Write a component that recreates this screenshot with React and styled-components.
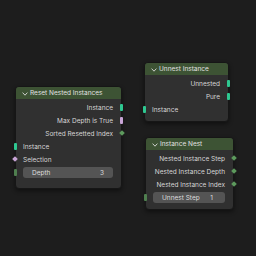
import React from "react";
import styled, { createGlobalStyle } from "styled-components";

const GlobalStyle = createGlobalStyle`
  html, body {
    margin: 0;
    padding: 0;
    background: #1d1d1d;
  }
  #root {
    width: 256px;
    height: 256px;
  }
`;

const SOCKET_COLORS = {
  instance: "#2ec891",
  bool: "#c8a4d6",
  int: "#5d9a5d",
  intDim: "#4f7f4f",
};

const nodes = [
  {
    id: "reset",
    title: "Reset Nested Instances",
    x: 15,
    y: 86,
    width: 107,
    padBottom: 9,
    valuePad: 9,
    rows: [
      { side: "out", label: "Instance", socket: "bar", color: "instance" },
      { side: "out", label: "Max Depth is True", socket: "bar", color: "bool" },
      { side: "out", label: "Sorted Resetted Index", socket: "diamond", color: "int" },
      { side: "in", label: "Instance", socket: "bar", color: "instance" },
      { side: "in", label: "Selection", socket: "diamond", color: "bool" },
      { side: "field", label: "Depth", value: "3", socket: "bar", color: "intDim" },
    ],
  },
  {
    id: "unnest",
    title: "Unnest Instance",
    x: 144,
    y: 62,
    width: 85,
    padBottom: 5,
    valuePad: 9,
    rows: [
      { side: "out", label: "Unnested", socket: "bar", color: "instance" },
      { side: "out", label: "Pure", socket: "bar", color: "instance" },
      { side: "in", label: "Instance", socket: "bar", color: "instance" },
    ],
  },
  {
    id: "nest",
    title: "Instance Nest",
    x: 145,
    y: 137,
    width: 89,
    padBottom: 5,
    valuePad: 12,
    rows: [
      { side: "out", label: "Nested Instance Step", socket: "diamond", color: "int" },
      { side: "out", label: "Nested Instance Depth", socket: "diamond", color: "int" },
      { side: "out", label: "Nested Instance Index", socket: "diamond", color: "int" },
      { side: "field", label: "Unnest Step", value: "1", socket: "bar", color: "intDim" },
    ],
  },
];

const Chevron = () => (
  <svg width="6" height="4" viewBox="0 0 6 4">
    <path d="M0.6 0.6 L3 3.2 L5.4 0.6" fill="none" stroke="#dcdcdc" strokeWidth="0.9" />
  </svg>
);

const Socket = ({ shape, color, side }) =>
  shape === "diamond" ? (
    <Diamond $color={SOCKET_COLORS[color]} $side={side} />
  ) : (
    <Bar $color={SOCKET_COLORS[color]} $side={side} />
  );

const NodeRow = ({ row, valuePad }) => {
  const side = row.side === "out" ? "out" : "in";
  if (row.side === "field") {
    return (
      <Row $side="in">
        <Socket shape={row.socket} color={row.color} side="in" />
        <Field $valuePad={valuePad}>
          <span>{row.label}</span>
          <span>{row.value}</span>
        </Field>
      </Row>
    );
  }
  return (
    <Row $side={side}>
      <Label>{row.label}</Label>
      <Socket shape={row.socket} color={row.color} side={side} />
    </Row>
  );
};

const App = () => (
  <>
    <GlobalStyle />
    <Canvas>
      {nodes.map((node) => (
        <Node key={node.id} style={{ left: node.x, top: node.y, width: node.width }}>
          <Header>
            <Chevron />
            <span>{node.title}</span>
          </Header>
          <Body $padBottom={node.padBottom}>
            {node.rows.map((row, i) => (
              <NodeRow key={i} row={row} valuePad={node.valuePad} />
            ))}
          </Body>
        </Node>
      ))}
    </Canvas>
  </>
);

export default App;

const Canvas = styled.div`
  position: relative;
  width: 256px;
  height: 256px;
  background: #1d1d1d;
  overflow: hidden;
  font-family: Inter, "Liberation Sans", sans-serif;
  font-size: 6.5px;
  color: #d6d6d6;
`;

const Node = styled.div`
  position: absolute;
  box-sizing: border-box;
  border-radius: 4px;
  background: #303030;
  border: 1px solid #161616;
  box-shadow: 0 2px 4px rgba(0, 0, 0, 0.45);
`;

const Header = styled.div`
  display: flex;
  align-items: center;
  gap: 2px;
  height: 12px;
  padding: 0 6px;
  background: #3d5334;
  border-radius: 3px 3px 0 0;
  color: #e2e2e2;

  svg {
    margin-top: 1px;
  }
`;

const Body = styled.div`
  display: flex;
  flex-direction: column;
  padding: 2px 0 ${(p) => p.$padBottom}px;
`;

const Row = styled.div`
  position: relative;
  display: flex;
  align-items: center;
  justify-content: ${(p) => (p.$side === "out" ? "flex-end" : "flex-start")};
  height: 13px;
  padding: 0 8px 0 7px;
`;

const Label = styled.span`
  white-space: nowrap;
`;

const Bar = styled.div`
  position: absolute;
  top: 3px;
  ${(p) => (p.$side === "out" ? "right: -2px;" : "left: -2px;")}
  width: 3px;
  height: 7px;
  border-radius: 1px;
  background: ${(p) => p.$color};
`;

const Diamond = styled.div`
  position: absolute;
  top: 4px;
  ${(p) => (p.$side === "out" ? "right: -3px;" : "left: -3px;")}
  width: 4px;
  height: 4px;
  transform: rotate(45deg);
  background: ${(p) => p.$color};
`;

const Field = styled.div`
  flex: 1;
  display: flex;
  justify-content: space-between;
  align-items: center;
  height: 11px;
  padding: 0 ${(p) => p.$valuePad}px 0 9px;
  border-radius: 3px;
  background: #545454;
  color: #dcdcdc;
  white-space: nowrap;
`;
